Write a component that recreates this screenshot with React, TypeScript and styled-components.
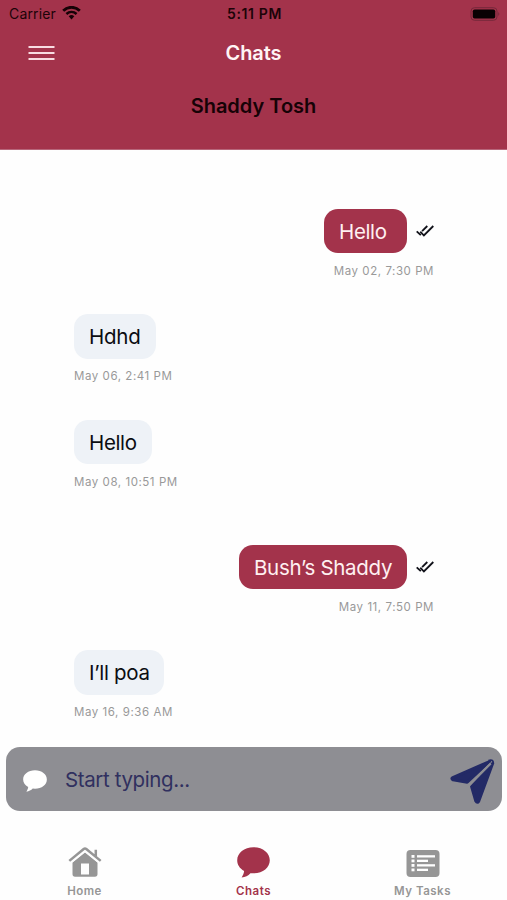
import React from "react";
import styled, { createGlobalStyle } from "styled-components";

const crimson = "#a3334b";
const navy = "#232a66";

const GlobalStyle = createGlobalStyle`
  * { box-sizing: border-box; }
  body { margin: 0; background: #fff; }
`;

const Screen = styled.div`
  width: 507px;
  height: 900px;
  display: flex;
  flex-direction: column;
  overflow: hidden;
  background: #fefefe;
  font-family: Inter, "Liberation Sans", sans-serif;
`;

const Header = styled.header`
  height: 150px;
  background: ${crimson};
  border-bottom: 1px solid #b7667a;
`;

const StatusBar = styled.div`
  height: 27px;
  padding: 0 7px 0 9px;
  display: grid;
  grid-template-columns: 1fr auto 1fr;
  align-items: center;
  color: #1c0308;
  line-height: 27px;
`;

const Carrier = styled.div`
  display: flex;
  align-items: center;
  gap: 6px;
  font-size: 14px;
  letter-spacing: 0.15px;
  svg { margin-bottom: 1px; }
`;

const Clock = styled.div`
  font-size: 14px;
  font-weight: 600;
  letter-spacing: 0.65px;
`;

const Battery = styled.div`
  display: flex;
  justify-content: flex-end;
`;

const NavBar = styled.div`
  height: 52px;
  padding: 0 28px;
  display: grid;
  grid-template-columns: 1fr auto 1fr;
  align-items: center;
`;

const MenuButton = styled.button`
  width: 27px;
  height: 16px;
  padding: 0;
  border: 0;
  background: none;
  display: flex;
  svg { display: block; }
`;

const Title = styled.h1`
  margin: 0;
  color: #fff4f5;
  font-size: 20px;
  line-height: 24px;
  font-weight: 600;
  letter-spacing: -0.1px;
`;

const Contact = styled.h2`
  margin: 15px 0 0;
  color: #160206;
  text-align: center;
  font-size: 20px;
  line-height: 24px;
  font-weight: 600;
  letter-spacing: 0;
`;

const Conversation = styled.main`
  height: 597px;
  padding: 58.5px 73px 0 74px;
`;

const Message = styled.article<{ $sent?: boolean; $offset?: boolean }>`
  height: 105.5px;
  margin-top: ${(p) => (p.$offset ? "19.5px" : "0")};
  display: flex;
  flex-direction: column;
  align-items: ${(p) => (p.$sent ? "flex-end" : "flex-start")};
`;

const BubbleRow = styled.div`
  height: 44.5px;
  display: flex;
  align-items: center;
  gap: 9.5px;
`;

const Bubble = styled.div<{ $sent?: boolean; $width: number; $tracking: number }>`
  width: ${(p) => p.$width}px;
  height: 44.5px;
  padding: 0 15px;
  border-radius: 14px;
  background: ${(p) => (p.$sent ? crimson : "#eef2f7")};
  color: ${(p) => (p.$sent ? "#fff0f1" : "#0b0d12")};
  font-size: 20.5px;
  line-height: 45px;
  letter-spacing: ${(p) => p.$tracking}px;
  white-space: nowrap;
`;

const Time = styled.time`
  margin-top: 9.5px;
  color: #999;
  font-size: 11.5px;
  line-height: 16px;
  letter-spacing: 0.55px;
`;

const Composer = styled.div`
  height: 64px;
  margin: 0 5px 0 6px;
  padding: 0 7px 0 17px;
  display: flex;
  align-items: center;
  border-radius: 14px;
  background: #8e8e93;
`;

const Placeholder = styled.span`
  flex: 1;
  margin-left: 18px;
  padding-top: 2px;
  color: #30305f;
  font-size: 20.5px;
  line-height: 26px;
  letter-spacing: -0.38px;
`;

const SendButton = styled.button`
  width: 45px;
  height: 46px;
  margin-top: 6px;
  padding: 0;
  border: 0;
  background: none;
  svg { display: block; }
`;

const TabBar = styled.nav`
  height: 89px;
  padding-top: 36px;
  display: grid;
  grid-template-columns: repeat(3, 1fr);
`;

const Tab = styled.a<{ $active?: boolean }>`
  display: flex;
  flex-direction: column;
  align-items: center;
  color: ${(p) => (p.$active ? crimson : "#969696")};
  font-size: 11.5px;
  line-height: 16px;
  font-weight: 600;
  letter-spacing: 0.5px;
  svg { display: block; margin-bottom: 5px; }
`;

const WifiIcon = () => (
  <svg width="19" height="14" viewBox="0 0 19 14" fill="none" stroke="#160206">
    <path d="M1.2 4.7C6 .2 13 .2 17.8 4.7" strokeWidth="2.9" />
    <path d="M4.4 8C7.4 5.3 11.6 5.3 14.6 8" strokeWidth="2.5" />
    <path d="M6.7 10.3Q9.5 7.9 12.3 10.3L9.5 13.5Z" fill="#160206" stroke="none" />
  </svg>
);

const BatteryIcon = () => (
  <svg width="30" height="14" viewBox="0 0 30 14">
    <rect x="1" y=".7" width="26" height="12.6" rx="3.5" fill="none" stroke="#75283a" />
    <rect x="2.8" y="2.5" width="22.4" height="9" rx="1.8" fill="#090103" />
    <path d="M28.3 5q2 2 0 4z" fill="#75283a" />
  </svg>
);

const ReadIcon = () => (
  <svg width="18" height="14" viewBox="0 0 18 14" fill="none" stroke="#11121a" strokeWidth="1.8">
    <path d="M.7 7.4 4.8 11.2M4.3 7.6 7.9 11.5 17.3 2M6.1 7.2 11.3 2" />
  </svg>
);

const SpeechIcon = ({ width, height }: { width: number; height: number }) => (
  <svg width={width} height={height} viewBox="0 0 32 30" preserveAspectRatio="none" fill="currentColor">
    <path d="M16 .3C7 .3.2 5.8.2 12.9c0 4.3 2.4 8 6.7 10.3-.1 2.1-1.1 4.1-2.4 6.3 3.5-.4 6.4-1.8 8.5-4.2l3 .2c9 0 15.8-5.5 15.8-12.6S25 .3 16 .3Z" />
  </svg>
);

const WhiteSpeech = styled.span`
  display: flex;
  margin-top: 4px;
  color: #fff;
`;

const SendIcon = () => (
  <svg width="45" height="46" viewBox="0 0 45 46" fill={navy} stroke={navy} strokeWidth="3" strokeLinejoin="round">
    <path d="M2.8 18.6 39.5 2.5 17.2 23.2 3 20.8Q.9 19.7 2.8 18.6Z" />
    <path d="M42.6 4.6 28.7 42.2Q27.4 44.5 25.8 42L21.6 27.5Z" />
    <path d="M19.3 26.2 40.7 4.4" fill="none" stroke="#8e8e93" strokeWidth="2.2" />
    <path d="M38.5 1.7Q43.7-.1 43.2 4.8" fill="none" strokeWidth="1.8" />
  </svg>
);

const HomeIcon = () => (
  <svg width="34" height="31" viewBox="0 0 34 31" fill="currentColor">
    <path d="M4.5 15.4 17 5.4l12.5 10v11.7q0 2.6-2.6 2.6H7.1q-2.6 0-2.6-2.6Z" />
    <path d="M13 16.5h8v11h-8Z" fill="#fefefe" />
    <path d="M1.5 14.5 17 1.8l15.5 12.7" fill="none" stroke="#fefefe" strokeWidth="5.2" />
    <path d="M1.3 13.9 15.7 2q1.3-1 2.6 0l14.4 11.9M27.8 9.5V2.8" fill="none" stroke="currentColor" strokeWidth="2.5" />
  </svg>
);

const TasksIcon = () => (
  <svg width="34" height="31" viewBox="0 0 34 31">
    <rect x=".5" y="3" width="33" height="27" rx="4" fill="currentColor" />
    <g fill="#fefefe">
      {[8, 12.5, 17, 21.5].map((y, i) => (
        <React.Fragment key={y}>
          <rect x="5.5" y={y} width="3" height="2.8" />
          <rect x="11" y={y + 0.2} width={i % 2 ? 11 : 18} height="2.3" />
        </React.Fragment>
      ))}
    </g>
  </svg>
);

const messages = [
  { text: "Hello", time: "May 02, 7:30 PM", width: 82.5, sent: true, tracking: -0.35 },
  { text: "Hdhd", time: "May 06, 2:41 PM", width: 81.5, tracking: -0.25 },
  { text: "Hello", time: "May 08, 10:51 PM", width: 77.5, tracking: -0.35 },
  { text: "Bush’s Shaddy", time: "May 11, 7:50 PM", width: 167.5, sent: true, offset: true, tracking: -0.29 },
  { text: "I’ll poa", time: "May 16, 9:36 AM", width: 90, tracking: -0.3 },
];

export default function App() {
  return (
    <>
      <GlobalStyle />
      <Screen>
        <Header>
          <StatusBar>
            <Carrier>Carrier <WifiIcon /></Carrier>
            <Clock>5:11 PM</Clock>
            <Battery><BatteryIcon /></Battery>
          </StatusBar>
          <NavBar>
            <MenuButton aria-label="Open menu">
              <svg width="27" height="16" viewBox="0 0 27 16" stroke="#f8dce2" strokeWidth="1.8">
                <path d="M.5 2h26M.5 8h26M.5 14h26" />
              </svg>
            </MenuButton>
            <Title>Chats</Title>
          </NavBar>
          <Contact>Shaddy Tosh</Contact>
        </Header>
        <Conversation>
          {messages.map((m) => (
            <Message key={m.time} $sent={m.sent} $offset={m.offset}>
              <BubbleRow>
                <Bubble $sent={m.sent} $width={m.width} $tracking={m.tracking}>{m.text}</Bubble>
                {m.sent && <ReadIcon />}
              </BubbleRow>
              <Time>{m.time}</Time>
            </Message>
          ))}
        </Conversation>
        <Composer>
          <WhiteSpeech><SpeechIcon width={24} height={22} /></WhiteSpeech>
          <Placeholder>Start typing...</Placeholder>
          <SendButton aria-label="Send"><SendIcon /></SendButton>
        </Composer>
        <TabBar>
          <Tab><HomeIcon />Home</Tab>
          <Tab $active><SpeechIcon width={33} height={31} />Chats</Tab>
          <Tab><TasksIcon />My Tasks</Tab>
        </TabBar>
      </Screen>
    </>
  );
}
